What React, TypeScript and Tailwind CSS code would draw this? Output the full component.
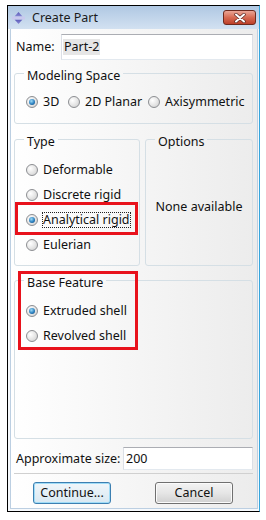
import React from 'react';

function Radio({ checked }: { checked?: boolean }) {
  return (
    <span className="w-[12px] h-[12px] shrink-0 rounded-full border border-[#8c8e92] bg-[radial-gradient(circle_at_35%_35%,#ffffff,#e4e4e4_55%,#c9c9c9)] flex items-center justify-center">
      {checked && (
        <span className="w-[6px] h-[6px] rounded-full bg-[radial-gradient(circle_at_40%_35%,#9fdcf8,#2a80c0_55%,#0c3f70)]" />
      )}
    </span>
  );
}

function Option({ label, checked, focused }: { label: string; checked?: boolean; focused?: boolean }) {
  return (
    <div className="flex items-center h-[16px]">
      <Radio checked={checked} />
      {focused ? (
        <span className="ml-[4px] border border-dotted border-[#222] leading-[14px]">{label}</span>
      ) : (
        <span className="ml-[5px]">{label}</span>
      )}
    </div>
  );
}

export default function App() {
  return (
    <div className="w-[266px] h-[520px] bg-white pt-[5px] pl-[7px] text-[12.5px] leading-[16px] text-[#111] font-['Noto_Sans',sans-serif]">
      <div className="relative w-[253px] h-[507px] border border-black border-r-[#35a6dc] flex flex-col">
        {/* title bar */}
        <div className="h-[23px] flex items-center pl-[4px] pr-[3px] bg-gradient-to-b from-[#b0c8e3] to-[#d2e1f1]">
          <svg width="13" height="12" viewBox="0 0 13 12">
            <defs>
              <linearGradient id="ic" x1="0" y1="0" x2="0" y2="1">
                <stop offset="0" stopColor="#5a5ab8" />
                <stop offset="1" stopColor="#8a8ad6" />
              </linearGradient>
            </defs>
            <path d="M6.5 0 L10.5 4.5 L2.5 4.5 Z" fill="url(#ic)" />
            <path d="M2.5 7.5 L10.5 7.5 L6.5 12 Z" fill="url(#ic)" />
            <rect x="0" y="4.5" width="13" height="3" fill="#c9c9ee" />
          </svg>
          <span className="ml-[7px] text-[#1b1b1b]">Create Part</span>
          <div className="ml-auto w-[33px] h-[15px] rounded-[3px] border border-[#6d2a1e] bg-gradient-to-b from-[#eaa595] via-[#d66a52] to-[#bd3f28] flex items-center justify-center">
            <svg width="12" height="10" viewBox="0 0 12 10">
              <path d="M2 1.5 L10 8.5 M10 1.5 L2 8.5" stroke="#5a2a24" strokeWidth="3.4" strokeLinecap="round" />
              <path d="M2 1.5 L10 8.5 M10 1.5 L2 8.5" stroke="#ffffff" strokeWidth="2" strokeLinecap="round" />
            </svg>
          </div>
        </div>

        {/* body */}
        <div className="flex-1 flex flex-col pl-[2px] pr-[1px] pb-[2px] bg-[#f6f9fc]">
          <div className="flex-1 flex flex-col pl-[3px] pr-[4px] border-x border-b border-[#bccfe2] bg-gradient-to-r from-white to-[#ececec]">
            {/* name */}
            <div className="mt-[5px] h-[26px] flex items-center">
              <span className="pl-[2px]">Name:</span>
              <div className="ml-auto w-[192px] h-[26px] bg-white border border-[#abadb3] border-b-[#e3e9ef] border-x-[#dbdfe6] flex items-center pl-[1px]">
                <span className="bg-[#e6e6e6] px-[1px]">Part-2</span>
              </div>
            </div>

            {/* modeling space */}
            <fieldset className="mt-[2px] h-[62px] border border-[#d5dfe5] rounded-[3px]">
              <legend className="ml-[9px] px-[3px] pt-[6px]">Modeling Space</legend>
              <div className="mt-[10px] pl-[11px] flex items-center">
                <div className="w-[42px]"><Option label="3D" checked /></div>
                <div className="w-[80px]"><Option label="2D Planar" /></div>
                <Option label="Axisymmetric" />
              </div>
            </fieldset>

            {/* type / options */}
            <div className="mt-[4px] flex gap-[5px]">
              <fieldset className="w-[126px] h-[138px] border border-[#d5dfe5] rounded-[3px]">
                <legend className="ml-[9px] px-[3px] pt-[6px]">Type</legend>
                <div className="mt-[12px] pl-[11px] flex flex-col gap-[9px]">
                  <Option label="Deformable" />
                  <Option label="Discrete rigid" />
                  <Option label="Analytical rigid" checked focused />
                  <Option label="Eulerian" />
                </div>
              </fieldset>
              <fieldset className="flex-1 h-[138px] border border-[#d5dfe5] rounded-[3px] flex flex-col">
                <legend className="ml-[9px] px-[3px] pt-[6px]">Options</legend>
                <div className="h-[114px] flex items-center justify-center">None available</div>
              </fieldset>
            </div>

            {/* base feature */}
            <fieldset className="mt-[3px] h-[170px] border border-[#d5dfe5] rounded-[3px]">
              <legend className="ml-[9px] px-[3px] pt-[6px]">Base Feature</legend>
              <div className="mt-[12px] pl-[11px] flex flex-col gap-[9px]">
                <Option label="Extruded shell" checked />
                <Option label="Revolved shell" />
              </div>
            </fieldset>

            {/* approximate size */}
            <div className="mt-[8px] h-[23px] flex items-center">
              <span className="pl-[2px]">Approximate size:</span>
              <div className="ml-auto w-[130px] h-[23px] bg-white border border-[#abadb3] border-b-[#e3e9ef] border-x-[#dbdfe6] flex items-center pl-[2px]">
                200
              </div>
            </div>

            <div className="mt-[3px] h-px bg-[#d0d0d0]" />

            {/* buttons */}
            <div className="mt-[8px] flex">
              <button className="ml-[19px] w-[78px] h-[22px] rounded-[3px] border border-[#3c7fb1] bg-gradient-to-b from-[#f0f6fa] to-[#d8e8f2] shadow-[inset_0_0_0_1px_#9fdcf7] flex items-center justify-center">
                Continue...
              </button>
              <button className="ml-[44px] w-[78px] h-[22px] rounded-[3px] border border-[#707070] bg-gradient-to-b from-[#f3f3f3] via-[#e6e6e6] to-[#d0d0d0] shadow-[inset_0_0_0_1px_#fbfbfb] flex items-center justify-center">
                Cancel
              </button>
            </div>
          </div>
        </div>

        {/* annotation boxes */}
        <div className="absolute left-[7px] top-[196px] w-[123px] h-[33px] border-[3px] border-[#e8121c]" />
        <div className="absolute left-[10px] top-[265px] w-[120px] h-[79px] border-[3px] border-[#e8121c]" />
      </div>
    </div>
  );
}
